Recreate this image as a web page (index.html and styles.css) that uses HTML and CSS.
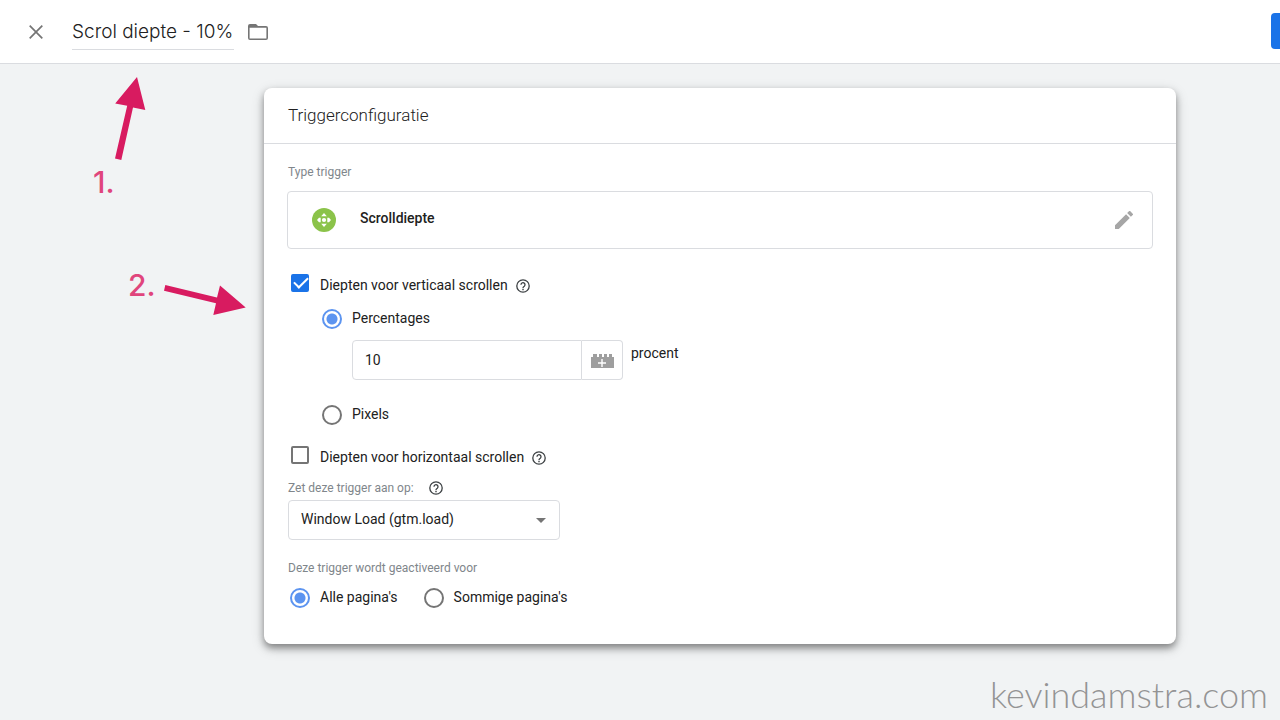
FILE: index.html
```html
<!DOCTYPE html>
<html lang="nl">
<head>
<meta charset="utf-8">
<meta name="viewport" content="width=device-width, initial-scale=1">
<title>Scrol diepte - 10%</title>
<link rel="stylesheet" href="styles.css">
</head>
<body>
<svg class="sprite" aria-hidden="true">
  <symbol id="help" viewBox="0 0 14 14">
    <circle cx="7" cy="7" r="6.2" fill="none" stroke="currentColor" stroke-width="1.3"/>
    <path d="M5 5.7a2 2 0 1 1 3.3 1.5C7.5 7.8 7 8 7 8.9" fill="none" stroke="currentColor" stroke-width="1.3"/>
    <path d="M6.3 9.8h1.4v1.4H6.3z" fill="currentColor"/>
  </symbol>
</svg>

<header class="topbar">
  <button class="icon-button close" type="button" aria-label="Sluiten">
    <svg width="14" height="14" viewBox="0 0 14 14"><path d="M.7.7l12.6 12.6M13.3.7L.7 13.3" fill="none" stroke="currentColor" stroke-width="1.7"/></svg>
  </button>
  <input class="title" type="text" value="Scrol diepte - 10%" aria-label="Naam van trigger">
  <button class="icon-button folder" type="button" aria-label="Map kiezen">
    <svg width="20" height="16" viewBox="0 0 20 16"><path d="M2 0h6l2 2h8a2 2 0 0 1 2 2v10a2 2 0 0 1-2 2H2a2 2 0 0 1-2-2V2a2 2 0 0 1 2-2zm-.4 3.8v10.6h16.8V3.8z" fill="currentColor" fill-rule="evenodd"/></svg>
  </button>
  <button class="save" type="button" aria-label="Opslaan"></button>
</header>

<main class="page">
  <section class="card">
    <h1 class="card-title">Triggerconfiguratie</h1>
    <form class="card-body">
      <p class="caption">Type trigger</p>
      <div class="type-box">
        <svg class="type-icon" width="24" height="24" viewBox="0 0 24 24">
          <circle cx="12" cy="12" r="12" fill="#8bc34a"/>
          <g fill="#fff">
            <circle cx="12" cy="12" r="2.1"/>
            <path d="M12 5l2.8 3.3H9.2zM12 19l2.8-3.3H9.2zM5 12l2-2.2h1.7v4.4H7zM19 12l-2-2.2h-1.7v4.4H17z"/>
          </g>
        </svg>
        <span class="type-name">Scrolldiepte</span>
        <button class="icon-button edit" type="button" aria-label="Bewerken">
          <svg width="18" height="18" viewBox="0 0 18 18"><path d="M0 14.25V18h3.75L14.81 6.94l-3.75-3.75zM17.71 4.04a1 1 0 0 0 0-1.41L15.37.29a1 1 0 0 0-1.41 0l-1.83 1.83 3.75 3.75z" fill="currentColor"/></svg>
        </button>
      </div>

      <div class="check-row first">
        <input class="check" type="checkbox" id="vertical" checked>
        <label for="vertical">Diepten voor verticaal scrollen</label>
        <svg class="help" width="14" height="14"><use href="#help"/></svg>
      </div>

      <div class="nested">
        <div class="radio-row">
          <input class="radio" type="radio" name="unit" id="percent" checked>
          <label for="percent">Percentages</label>
        </div>
        <div class="amount">
          <input class="amount-input" type="text" value="10" aria-label="Percentages">
          <button class="variable" type="button" aria-label="Variabele invoegen">
            <svg width="24" height="14" viewBox="0 0 24 14"><path d="M1 3h2V0h4v3h2V0h3v3h2V0h3v3h2V0h3v3h2v11H1z" fill="#9e9e9e"/><path d="M12 5v8M8 9h8" stroke="#fff" stroke-width="1.4"/></svg>
          </button>
          <span class="unit">procent</span>
        </div>
        <div class="radio-row">
          <input class="radio" type="radio" name="unit" id="pixels">
          <label for="pixels">Pixels</label>
        </div>
      </div>

      <div class="check-row second">
        <input class="check" type="checkbox" id="horizontal">
        <label for="horizontal">Diepten voor horizontaal scrollen</label>
        <svg class="help" width="14" height="14"><use href="#help"/></svg>
      </div>

      <div class="caption enable">
        <label for="event">Zet deze trigger aan op:</label>
        <svg class="help" width="14" height="14"><use href="#help"/></svg>
      </div>
      <div class="select-wrap">
        <select class="select" id="event"><option>Window Load (gtm.load)</option></select>
      </div>

      <p class="caption fires">Deze trigger wordt geactiveerd voor</p>
      <div class="scope">
        <div class="radio-row">
          <input class="radio" type="radio" name="scope" id="all" checked>
          <label for="all">Alle pagina's</label>
        </div>
        <div class="radio-row">
          <input class="radio" type="radio" name="scope" id="some">
          <label for="some">Sommige pagina's</label>
        </div>
      </div>
    </form>
  </section>
</main>

<svg class="arrows" width="264" height="330" viewBox="0 0 264 330" fill="#d81b60" aria-hidden="true">
  <path d="M137 77l8.3 33-12.3-2.600-11.700 52.600-6.300-1.400 12.200-52.800-12-2.300z"/>
  <path d="M165.300 285l51.700 12.500 3-12 25.700 22L213.300 315l2.700-11.700L164 290.800z"/>
</svg>
<span class="step step-one">1.</span>
<span class="step step-two">2.</span>
<footer class="watermark">kevindamstra.com</footer>
</body>
</html>
```
FILE: styles.css
```css
* {
  box-sizing: border-box;
}

body {
  margin: 0;
  min-height: 100vh;
  position: relative;
  display: flex;
  flex-direction: column;
  background: #f1f3f4;
  color: #212121;
  font: 14px/20px Roboto, sans-serif;
}

input,
select,
button {
  margin: 0;
  padding: 0;
  border: 0;
  font: inherit;
  color: inherit;
  background: none;
}

.sprite {
  display: none;
}

svg {
  display: block;
  flex: none;
}

.icon-button {
  display: flex;
  color: #757575;
}

.topbar {
  display: flex;
  align-items: center;
  height: 64px;
  padding-left: 29px;
  overflow: hidden;
  background: #fff;
  border-bottom: 1px solid #dadce0;
}

.title {
  width: 162px;
  height: 36px;
  margin: 0 14px 0 29px;
  border-bottom: 1px solid #dadce0;
  font: 300 19px/24px Inter, sans-serif;
}

.save {
  flex: none;
  width: 80px;
  height: 36px;
  margin: 0 -71px 1px auto;
  border-radius: 4px;
  background: #1a73e8;
}

.page {
  padding: 24px 104px 0 264px;
}

.card {
  border-radius: 8px;
  background: #fff;
  box-shadow: 0 4px 7px rgba(0, 0, 0, .38), 0 4px 14px rgba(0, 0, 0, .16);
}

.card-title {
  margin: 0;
  padding: 15px 24px 16px;
  border-bottom: 1px solid #dadce0;
  font: 300 17px/24px Roboto, sans-serif;
}

.card-body {
  padding: 20px 24px 36px;
}

.caption {
  margin: 0;
  color: #80868b;
  font-size: 12px;
  line-height: 16px;
}

.type-box {
  display: flex;
  align-items: center;
  height: 58px;
  margin: 11px -1px 0;
  padding: 0 19px 0 24px;
  border: 1px solid #dadce0;
  border-radius: 4px;
}

.type-name {
  flex: 1;
  margin-left: 24px;
  padding-bottom: 4px;
  font-weight: 500;
}

.edit {
  color: #a6a6a6;
}

.check-row {
  display: flex;
  align-items: flex-start;
  padding-left: 3px;
  line-height: 24px;
}

.first {
  margin-top: 24px;
}

.second {
  margin-top: 20px;
}

.check {
  appearance: none;
  width: 18px;
  height: 18px;
  margin: 1px 11px 0 0;
  border: 2px solid #757575;
  border-radius: 2px;
}

.check:checked {
  border-color: #1a73e8;
  background: #1a73e8;
}

.check:checked::before {
  content: "";
  display: block;
  width: 12px;
  height: 6px;
  margin: 2px 0 0 1px;
  border: solid #fff;
  border-width: 0 0 2px 2px;
  transform: translateY(-1px) rotate(-45deg);
}

.help {
  color: #3c4043;
}

.check-row .help {
  margin: 6px 0 0 8px;
}

.nested {
  padding: 12px 0 0 34px;
}

.radio-row {
  display: flex;
  gap: 10px;
}

.radio-row label {
  line-height: 18px;
}

.radio {
  appearance: none;
  flex: none;
  width: 20px;
  height: 20px;
  border: 2px solid #757575;
  border-radius: 50%;
}

.radio:checked {
  border-color: #5c94f0;
  background: radial-gradient(circle, #5c94f0 5px, #fff 6px);
}

.amount {
  display: flex;
  margin: 11px 0 25px 30px;
}

.amount-input {
  width: 230px;
  height: 40px;
  padding: 0 12px;
  border: 1px solid #dadce0;
  border-radius: 4px 0 0 4px;
}

.variable {
  display: flex;
  align-items: center;
  justify-content: center;
  width: 41px;
  padding-top: 1px;
  border: 1px solid #dadce0;
  border-left: 0;
  border-radius: 0 4px 4px 0;
}

.unit {
  margin: 3px 0 0 8px;
}

.enable {
  display: flex;
  align-items: center;
  gap: 15px;
  margin-top: 11px;
}

.select-wrap {
  position: relative;
  width: 272px;
  margin-top: 4px;
}

.select-wrap::after {
  content: "";
  position: absolute;
  top: 18px;
  right: 14px;
  border: solid transparent;
  border-width: 5px 5px 0;
  border-top-color: #757575;
  pointer-events: none;
}

.select {
  appearance: none;
  display: block;
  width: 100%;
  height: 40px;
  padding: 0 32px 2px 12px;
  border: 1px solid #dadce0;
  border-radius: 4px;
}

.fires {
  margin-top: 20px;
}

.scope {
  display: flex;
  gap: 26px;
  margin-top: 12px;
  padding-left: 2px;
}

.arrows {
  position: absolute;
  top: 0;
  left: 0;
  pointer-events: none;
}

.step {
  position: absolute;
  color: #e0457c;
  font: 500 30px/32px Inter, sans-serif;
}

.step-one {
  top: 166px;
  left: 93px;
}

.step-two {
  top: 269px;
  left: 128px;
}

.watermark {
  margin: auto 12px 6px auto;
  color: #949494;
  font: 300 36px/40px Lato, sans-serif;
}
```
